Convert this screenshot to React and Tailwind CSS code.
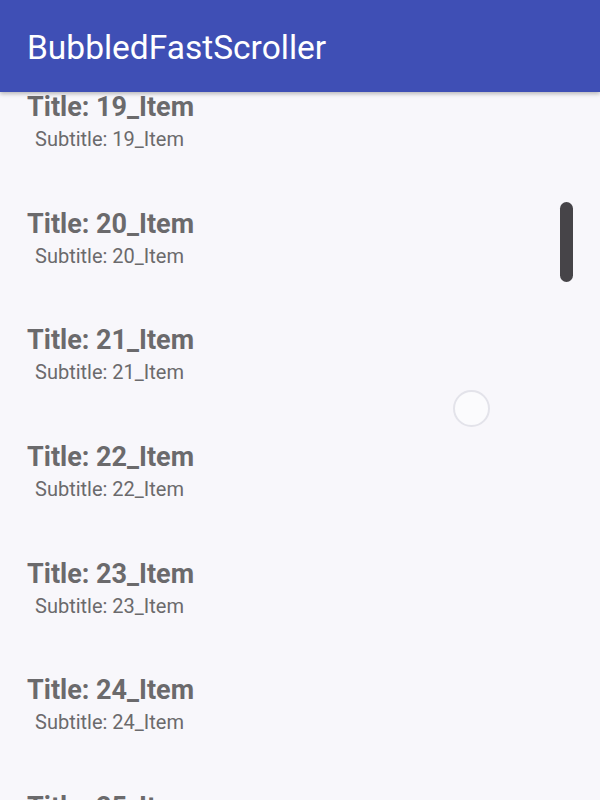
import React from 'react';

const items = [19, 20, 21, 22, 23, 24, 25];

function Row({ n }) {
  return (
    <div className="h-[116.67px] pt-[20px] pl-[27px]">
      <div className="text-[27px] leading-[32px] font-bold text-[#6b6a6c]">Title: {n}_Item</div>
      <div className="text-[20px] leading-[24px] mt-[4px] pl-[8px] text-[#6b6a6c]">Subtitle: {n}_Item</div>
    </div>
  );
}

export default function App() {
  return (
    <div className="w-[600px] h-[800px] flex flex-col bg-[#f8f7fb] overflow-hidden" style={{ fontFamily: 'Roboto, "Noto Sans", sans-serif' }}>
      {/* App bar */}
      <div className="relative z-10 h-[92px] shrink-0 bg-[#3f4fb5] flex items-center pl-[27px] shadow-[0_2px_4px_rgba(0,0,0,0.25)]">
        <span className="text-white text-[33.5px] leading-none pt-[4px]">BubbledFastScroller</span>
      </div>

      {/* List */}
      <div className="relative flex-1 overflow-hidden">
        <div className="-mt-[21px]">
          {items.map((n) => (
            <Row key={n} n={n} />
          ))}
        </div>

        {/* fast scroller thumb */}
        <div className="absolute left-[560px] top-[110px] w-[13px] h-[80px] rounded-full bg-[#464448]" />

        {/* touch ripple ring */}
        <div className="absolute left-[453px] top-[298px] w-[37px] h-[37px] rounded-full border-2 border-[#e3e3ea] bg-[#fbfbfd]" />
      </div>
    </div>
  );
}
